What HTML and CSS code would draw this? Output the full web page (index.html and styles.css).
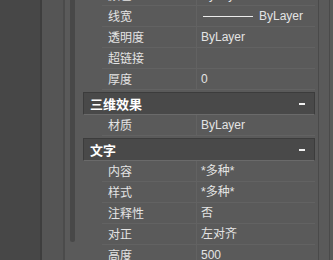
FILE: index.html
```html
<!DOCTYPE html>
<html lang="zh-CN">
<head>
  <meta charset="UTF-8">
  <title>特性</title>
  <link rel="stylesheet" href="styles.css">
</head>
<body>
  <div class="app">
    <div class="side"></div>
    <div class="strip"></div>
    <div class="track"><div class="thumb"></div></div>

    <div class="panel">
      <div class="list">
        <div class="group">
          <div class="row"><span class="label">颜色</span><span class="value">ByLayer</span></div>
          <div class="row"><span class="label">线宽</span><span class="value"><i class="line"></i>ByLayer</span></div>
          <div class="row"><span class="label">透明度</span><span class="value">ByLayer</span></div>
          <div class="row"><span class="label">超链接</span><span class="value"></span></div>
          <div class="row"><span class="label">厚度</span><span class="value">0</span></div>
        </div>

        <div class="group">
          <div class="head"><span>三维效果</span><b class="minus"></b></div>
          <div class="row"><span class="label">材质</span><span class="value">ByLayer</span></div>
        </div>

        <div class="group">
          <div class="head"><span>文字</span><b class="minus"></b></div>
          <div class="row"><span class="label">内容</span><span class="value">*多种*</span></div>
          <div class="row"><span class="label">样式</span><span class="value">*多种*</span></div>
          <div class="row"><span class="label">注释性</span><span class="value">否</span></div>
          <div class="row"><span class="label">对正</span><span class="value">左对齐</span></div>
          <div class="row"><span class="label">高度</span><span class="value">500</span></div>
        </div>
      </div>
    </div>

    <div class="edge"></div>
  </div>
</body>
</html>
```

FILE: styles.css
```css
:root {
  --bg: #5a5a5a;
  --side: #474747;
  --dark-line: #3e3e3e;
  --row-line: #626262;
  --head-bg: #494949;
  --text: #e4e4e4;
}

body {
  margin: 0;
  background-color: var(--bg);
  font-family: "Noto Sans CJK SC", "Liberation Sans", sans-serif;
  font-size: 12px;
  color: var(--text);
  overflow: hidden;
}

.app {
  display: flex;
  height: 260px;
}

.side {
  width: 40px;
  background-color: var(--side);
  border-right: 2px solid var(--dark-line);
}

.strip {
  width: 21px;
  background-color: #555555;
  border-right: 2px solid #4b4b4b;
}

.track {
  width: 15px;
  padding: 0 5px;
  box-sizing: border-box;
}

.thumb {
  height: 242px;
  background-color: #484848;
  border-radius: 0 0 3px 3px;
}

.panel {
  width: 232px;
  padding-left: 3px;
  overflow: hidden;
}

.list {
  margin-top: -15px;
}

.group {
  margin-bottom: 2px;
}

.row {
  display: flex;
  height: 20px;
  margin-left: 19px;
  border-bottom: 1px solid var(--row-line);
  line-height: 20px;
}

.label {
  width: 88px;
  padding-left: 6px;
  border-right: 1px solid var(--row-line);
}

.value {
  flex: 1;
  display: flex;
  align-items: center;
  padding-left: 4px;
  font-family: "Liberation Sans", "Noto Sans CJK SC", sans-serif;
}

.line {
  width: 50px;
  height: 1px;
  margin: 0 6px 0 2px;
  background-color: #ececec;
}

.head {
  display: flex;
  align-items: center;
  justify-content: space-between;
  height: 21px;
  padding: 0 9px 0 6px;
  background-color: var(--head-bg);
  border: 1px solid #3c3c3c;
  border-bottom-color: #6a6a6a;
  font-weight: bold;
  font-size: 13px;
  color: #ffffff;
}

.minus {
  width: 6px;
  height: 2px;
  background-color: #f0f0f0;
}

.edge {
  flex: 1;
  margin: 0 3px;
  border-left: 1px solid #4a4a4a;
  border-right: 1px solid #4a4a4a;
}
```
